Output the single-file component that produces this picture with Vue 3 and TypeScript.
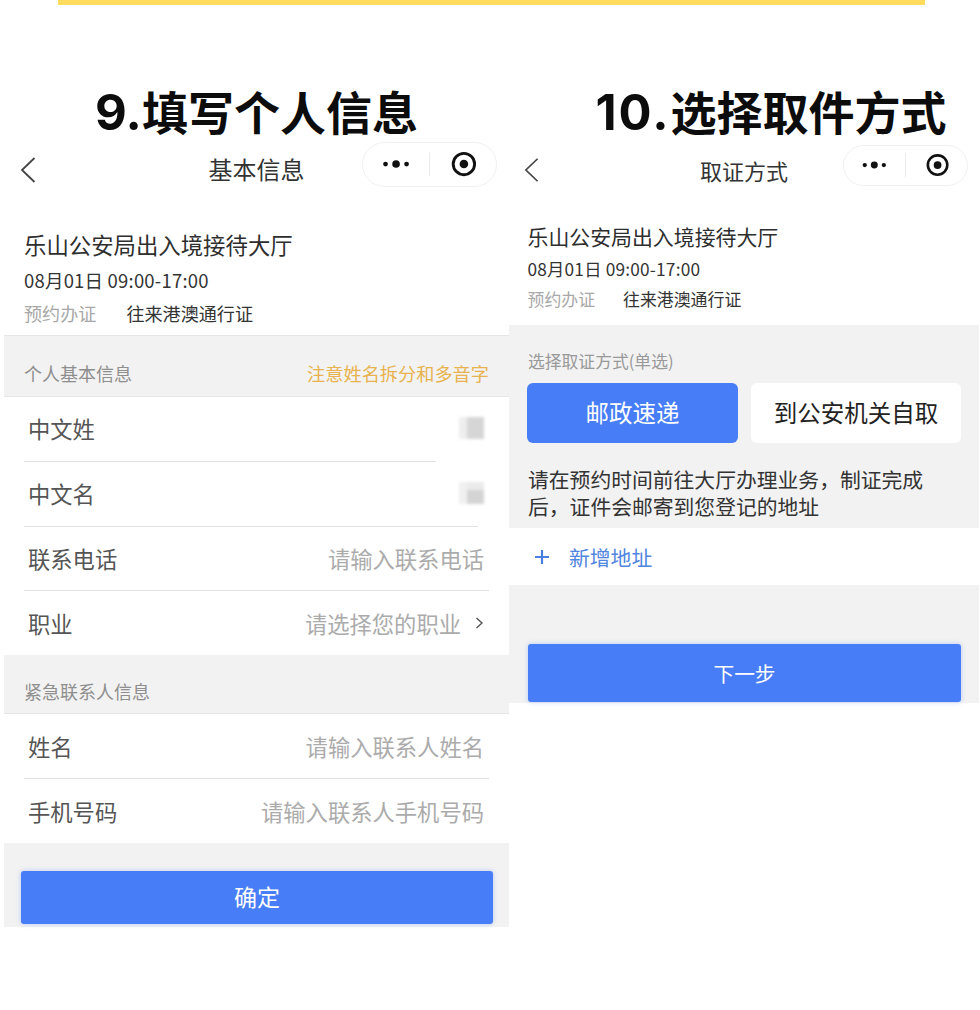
<script setup lang="ts">
interface FormRow {
  label: string
  placeholder?: string
  mask?: string
  arrow?: boolean
  line?: string
}

const personalRows: FormRow[] = [
  { label: '中文姓', mask: 'mask-side', line: 'line-short' },
  { label: '中文名', mask: 'mask-low', line: 'line-mid' },
  { label: '联系电话', placeholder: '请输入联系电话' },
  { label: '职业', placeholder: '请选择您的职业', arrow: true }
]

const contactRows: FormRow[] = [
  { label: '姓名', placeholder: '请输入联系人姓名' },
  { label: '手机号码', placeholder: '请输入联系人手机号码' }
]

const sections = [
  { title: '个人基本信息', tip: '注意姓名拆分和多音字', rows: personalRows, cls: 'first' },
  { title: '紧急联系人信息', tip: '', rows: contactRows, cls: 'second' }
]
</script>

<template>
  <div class="page">
    <div class="yellow-bar" />
    <div class="columns">
      <section class="panel panel-left">
        <h1 class="step-title"><span class="step-num">9.</span>填写个人信息</h1>
        <header class="nav">
          <svg class="back" viewBox="0 0 16 26" width="16" height="26">
            <path d="M14.5 1 2 13l12.5 12" fill="none" stroke="#444" stroke-width="1.8" />
          </svg>
          <div class="nav-title">基本信息</div>
          <div class="capsule">
            <svg viewBox="0 0 135 45" width="100%" height="100%">
              <circle cx="21.5" cy="22" r="2.5" fill="#111" />
              <circle cx="32.5" cy="22" r="4" fill="#111" />
              <circle cx="43.5" cy="22" r="2.5" fill="#111" />
              <path d="M67.5 10v25" stroke="#ececec" stroke-width="1.2" />
              <circle cx="103.5" cy="22" r="11.2" fill="none" stroke="#111" stroke-width="3" />
              <circle cx="103.5" cy="22" r="4.5" fill="#111" />
            </svg>
          </div>
        </header>
        <div class="info">
          <div class="info-name">乐山公安局出入境接待大厅</div>
          <div class="info-date">08月01日 09:00-17:00</div>
          <div class="info-type"><span class="muted">预约办证</span><span>往来港澳通行证</span></div>
        </div>

        <template v-for="section in sections" :key="section.title">
          <div class="section-head" :class="section.cls">
            <span>{{ section.title }}</span>
            <span v-if="section.tip" class="tip">{{ section.tip }}</span>
          </div>
          <div class="rows" :class="section.cls">
            <div v-for="(row, i) in section.rows" :key="row.label">
              <div class="row">
                <span class="row-label">{{ row.label }}</span>
                <span v-if="row.placeholder" class="row-hint">{{ row.placeholder }}</span>
                <span v-if="row.mask" class="mask" :class="row.mask" />
                <svg v-if="row.arrow" class="arrow" viewBox="0 0 9 12" width="9" height="12">
                  <path d="M1.5 1 7 6l-5.5 5" fill="none" stroke="#555" stroke-width="1.4" />
                </svg>
              </div>
              <div v-if="i < section.rows.length - 1" class="line" :class="row.line" />
            </div>
          </div>
        </template>

        <div class="foot">
          <button class="primary confirm" type="button">确定</button>
        </div>
      </section>

      <section class="panel panel-right">
        <h1 class="step-title"><span class="step-num">10.</span>选择取件方式</h1>
        <header class="nav">
          <svg class="back" viewBox="0 0 16 26" width="16" height="26">
            <path d="M14.5 1 2 13l12.5 12" fill="none" stroke="#444" stroke-width="1.8" />
          </svg>
          <div class="nav-title">取证方式</div>
          <div class="capsule">
            <svg viewBox="0 0 135 45" width="100%" height="100%">
              <circle cx="20.5" cy="22" r="2.5" fill="#111" />
              <circle cx="31.5" cy="22" r="4" fill="#111" />
              <circle cx="42.5" cy="22" r="2.5" fill="#111" />
              <path d="M67.5 8v28" stroke="#ececec" stroke-width="1.2" />
              <circle cx="104.5" cy="22" r="11.2" fill="none" stroke="#111" stroke-width="3" />
              <circle cx="104.5" cy="22" r="4.5" fill="#111" />
            </svg>
          </div>
        </header>
        <div class="info">
          <div class="info-name">乐山公安局出入境接待大厅</div>
          <div class="info-date">08月01日 09:00-17:00</div>
          <div class="info-type"><span class="muted">预约办证</span><span>往来港澳通行证</span></div>
        </div>

        <div class="pick">
          <div class="pick-title">选择取证方式(单选)</div>
          <div class="pick-options">
            <div class="option active">邮政速递</div>
            <div class="option">到公安机关自取</div>
          </div>
          <p class="pick-note">请在预约时间前往大厅办理业务，制证完成后，证件会邮寄到您登记的地址</p>
        </div>
        <div class="add-address">
          <svg viewBox="0 0 14 14" width="14" height="14">
            <path d="M7 0v14M0 7h14" stroke="#4a7fe0" stroke-width="2.2" />
          </svg>
          <span>新增地址</span>
        </div>
        <div class="foot">
          <button class="primary next" type="button">下一步</button>
        </div>
      </section>
    </div>
  </div>
</template>

<style scoped>
.page {
  width: 980px;
  height: 1010px;
  overflow: hidden;
  background: #fff;
  font-family: "Noto Sans CJK SC", "Liberation Sans", sans-serif;
  color: #333;
}

.yellow-bar {
  height: 5px;
  margin: 0 55px 0 58px;
  background: #ffdc5e;
}

.columns {
  display: grid;
  grid-template-columns: 505px 470px;
  margin: 82px 0 0 4px;
}

.step-title {
  margin: 0;
  height: 50px;
  font-size: 46px;
  line-height: 46px;
  font-weight: 700;
  color: #0c0c0c;
  text-align: center;
  white-space: nowrap;
}

.step-num {
  font-family: Inter, "Liberation Sans", sans-serif;
  font-size: 49px;
}

.panel-right .step-num {
  letter-spacing: 2px;
}

.panel-right .step-title {
  padding-left: 54px;
}

.nav {
  display: grid;
  grid-template-columns: 1fr auto 1fr;
  height: 68px;
  align-items: start;
}

.back {
  margin: 20px 0 0 16px;
}

.panel-right .back {
  margin: 20px 0 0 15px;
  width: 15px;
}

.nav-title {
  margin-top: 18px;
  font-size: 24px;
  line-height: 28px;
  color: #333;
}

.panel-right .nav-title {
  font-size: 22px;
  margin-top: 19px;
}

.capsule {
  justify-self: end;
  box-sizing: border-box;
  width: 135px;
  height: 45px;
  margin: 5px 12px 0 0;
  border: 1px solid #f1f1f1;
  border-radius: 23px;
}

.panel-right .capsule {
  width: 125px;
  height: 41px;
  margin: 8px 11px 0 0;
  border-radius: 21px;
}

.capsule svg {
  display: block;
}

.info {
  box-sizing: border-box;
  height: 131px;
  padding: 24px 0 0 20px;
  border-bottom: 1px solid #e6e6e6;
}

.info-name {
  font-size: 22.4px;
  line-height: 30px;
  color: #2e2e2e;
}

.info-date {
  margin-top: 8px;
  font-size: 18.5px;
  line-height: 26px;
  letter-spacing: 0.2px;
}

.info-type {
  display: flex;
  gap: 30px;
  margin-top: 7px;
  font-size: 18.1px;
  line-height: 26px;
}

.muted {
  color: #a8a8a8;
}

.panel-right .info {
  height: 120px;
  padding: 19px 0 0 18.5px;
  border-bottom: none;
}

.panel-right .info-name {
  font-size: 20.9px;
  line-height: 24px;
}

.panel-right .info-date {
  margin-top: 9px;
  font-size: 17.3px;
  line-height: 24px;
}

.panel-right .info-type {
  gap: 28px;
  margin-top: 6px;
  font-size: 16.9px;
  line-height: 24px;
}

.section-head {
  display: flex;
  justify-content: space-between;
  box-sizing: border-box;
  padding: 24px 20px 0 20px;
  background: #f2f2f2;
  border-bottom: 1px solid #e6e6e6;
  font-size: 18px;
  line-height: 26px;
  color: #8e8e8e;
}

.section-head.first {
  height: 61px;
}

.section-head.second {
  height: 59px;
  padding-top: 23px;
}

.tip {
  font-size: 18.2px;
  color: #e8b24e;
}

.rows {
  padding: 0 20px;
  background: #fff;
}

.row {
  display: flex;
  align-items: center;
  justify-content: space-between;
  box-sizing: border-box;
  height: 63.75px;
  padding: 0 5px 1px 4px;
  font-size: 22.3px;
}

.rows.second .row {
  padding: 1px 5px 0 4px;
}

.row-label {
  color: #555;
}

.row-hint {
  margin-left: auto;
  color: #ababab;
}

.mask {
  width: 25px;
  height: 22px;
  filter: blur(1.5px);
}

.mask-side {
  background: linear-gradient(90deg, #eeeeee 30%, #d6d6d6 30%);
}

.mask-low {
  background: linear-gradient(90deg, #f0f0f0 30%, transparent 30%), linear-gradient(180deg, #ebebeb 35%, #d4d4d4 35%);
}

.arrow {
  margin-left: 14px;
}

.line {
  height: 1px;
  background: #e2e2e2;
}

.line-short {
  width: 412px;
}

.line-mid {
  width: 454px;
}

.foot {
  background: #f2f2f2;
}

.panel-left .foot {
  height: 84.5px;
  padding: 28px 16px 0 17px;
  box-sizing: border-box;
}

.primary {
  display: block;
  width: 100%;
  border: none;
  border-radius: 3px;
  background: #477df7;
  color: #fff;
  font-family: inherit;
  box-shadow: 0 0 5px rgba(71, 125, 247, 0.35);
}

.confirm {
  height: 53px;
  padding-bottom: 3px;
  font-size: 23px;
}

.panel-right .foot {
  height: 118px;
  padding: 59px 18px 0 19px;
  box-sizing: border-box;
}

.next {
  height: 58px;
  font-size: 20.7px;
}

.pick {
  box-sizing: border-box;
  height: 203px;
  padding: 24px 18px 0 19px;
  background: #f2f2f2;
}

.pick-title {
  font-size: 16.8px;
  line-height: 24px;
  color: #999;
}

.pick-options {
  display: grid;
  grid-template-columns: 211px 210px;
  gap: 13px;
  margin: 10px 0 0 -1px;
}

.option {
  height: 60px;
  border-radius: 6px;
  background: #fff;
  font-size: 23.5px;
  line-height: 58px;
  text-align: center;
  color: #222;
}

.option.active {
  background: #477df7;
  color: #fff;
}

.pick-note {
  width: 410px;
  margin: 23px 0 0;
  font-size: 20.8px;
  line-height: 27px;
  color: #333;
}

.add-address {
  display: flex;
  align-items: center;
  gap: 20px;
  height: 57px;
  padding-left: 26px;
  background: #fff;
  font-size: 20.8px;
  color: #5085e0;
}
</style>
